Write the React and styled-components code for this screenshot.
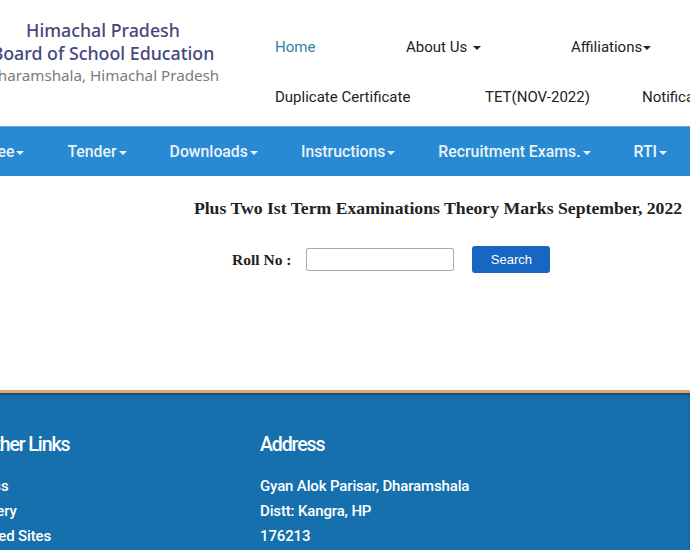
import React from "react";
import styled, { createGlobalStyle } from "styled-components";

const GlobalStyle = createGlobalStyle`
  html, body {
    margin: 0;
    padding: 0;
    background: #ffffff;
    overflow: hidden;
  }
  body {
    font-family: Roboto, "Liberation Sans", sans-serif;
  }
`;

const Header = styled.header`
  display: flex;
  height: 126px;
  background: #ffffff;
`;

const Brand = styled.div`
  flex: none;
  width: 250px;
  margin-left: -22px;
  padding-top: 19px;
  text-align: center;
  font-family: "Noto Sans", "Open Sans", sans-serif;
  white-space: nowrap;
`;

const BrandLine = styled.div`
  font-size: ${(p) => p.$size || 17.8}px;
  line-height: 22.5px;
  font-weight: ${(p) => (p.$muted ? 400 : 500)};
  color: ${(p) => (p.$muted ? "#7b7b7b" : "#45487c")};
`;

const TopMenu = styled.nav`
  display: flex;
  flex-direction: column;
  margin-left: 47px;
  padding-top: 37px;
  gap: 30px;
`;

const MenuRow = styled.div`
  display: flex;
  white-space: nowrap;
`;

const MenuItem = styled.a`
  display: inline-flex;
  align-items: center;
  flex: none;
  width: ${(p) => (p.$w ? `${p.$w}px` : "auto")};
  font-size: 15px;
  line-height: 20px;
  color: ${(p) => (p.$active ? "#2f7fa8" : "#222222")};
  text-decoration: none;
`;

const Caret = styled.span`
  display: inline-block;
  width: 0;
  height: 0;
  margin-left: ${(p) => (p.$gap ? p.$gap : 3)}px;
  margin-top: 2px;
  border-top: 4px solid currentColor;
  border-left: 4px solid transparent;
  border-right: 4px solid transparent;
`;

const NavBar = styled.nav`
  height: 50px;
  background: #278ad2;
  border-top: 1px solid #5aaee6;
  box-sizing: border-box;
  display: flex;
  align-items: center;
  gap: 43px;
  white-space: nowrap;
  overflow: hidden;
`;

const NavItem = styled.a`
  display: inline-flex;
  align-items: center;
  flex: none;
  font-size: 15.8px;
  font-weight: 500;
  color: #eaf3fb;
  text-decoration: none;
  &:first-child {
    margin-left: -11px;
  }
`;

const Main = styled.main`
  height: 214px;
  padding-top: 21px;
  box-sizing: border-box;
`;

const Title = styled.h2`
  margin: 0 0 0 180px;
  width: 516px;
  text-align: center;
  font-family: "Liberation Serif", "Times New Roman", serif;
  font-size: 17.7px;
  font-weight: 700;
  color: #222222;
  line-height: 22px;
  white-space: nowrap;
`;

const SearchForm = styled.form`
  display: flex;
  align-items: center;
  margin: 27px 0 0 232px;
`;

const Label = styled.label`
  font-family: "Liberation Serif", "Times New Roman", serif;
  font-size: 15.5px;
  font-weight: 700;
  color: #222222;
  margin-right: 15px;
`;

const Input = styled.input`
  width: 148px;
  height: 23px;
  box-sizing: border-box;
  border: 1px solid #a9a9a9;
  border-radius: 2px;
  padding: 0 6px;
  outline: none;
`;

const Button = styled.button`
  margin-left: 18px;
  width: 78px;
  height: 27px;
  border: none;
  border-radius: 3px;
  background: #1766c2;
  color: #ffffff;
  font-family: "Liberation Sans", Arial, sans-serif;
  font-size: 13px;
  cursor: pointer;
`;

const Footer = styled.footer`
  height: 160px;
  background: #1670ad;
  border-top: 3px solid #e2a673;
  box-shadow: inset 0 2px 2px rgba(40, 40, 50, 0.55);
  display: grid;
  grid-template-columns: 289px 300px;
  margin-left: -29px;
  padding-top: 39px;
  box-sizing: border-box;
  color: #ffffff;
`;

const FooterCol = styled.div`
  display: flex;
  flex-direction: column;
`;

const FooterHeading = styled.h3`
  margin: 0 0 16px;
  padding-left: ${(p) => p.$indent || 0}px;
  font-size: 19.5px;
  font-weight: 500;
  letter-spacing: -1.1px;
  line-height: 26px;
  white-space: nowrap;
`;

const FooterLink = styled.span`
  font-size: 15px;
  font-weight: 500;
  letter-spacing: -0.15px;
  line-height: 25px;
  white-space: nowrap;
`;

const navItems = [
  "Fee",
  "Tender",
  "Downloads",
  "Instructions",
  "Recruitment Exams.",
  "RTI",
  "Events",
];

function App() {
  return (
    <>
      <GlobalStyle />
      <Header>
        <Brand>
          <BrandLine>Himachal Pradesh</BrandLine>
          <BrandLine>Board of School Education</BrandLine>
          <BrandLine $muted $size={15.2}>
            Dharamshala, Himachal Pradesh
          </BrandLine>
        </Brand>
        <TopMenu>
          <MenuRow>
            <MenuItem $w={131} $active>
              Home
            </MenuItem>
            <MenuItem $w={165}>
              About Us <Caret $gap={6} />
            </MenuItem>
            <MenuItem>
              Affiliations
              <Caret $gap={1} />
            </MenuItem>
          </MenuRow>
          <MenuRow>
            <MenuItem $w={210}>Duplicate Certificate</MenuItem>
            <MenuItem $w={157}>TET(NOV-2022)</MenuItem>
            <MenuItem>Notifications</MenuItem>
          </MenuRow>
        </TopMenu>
      </Header>
      <NavBar>
        {navItems.map((item) => (
          <NavItem key={item}>
            {item}
            {item !== "Events" && <Caret $gap={2} />}
          </NavItem>
        ))}
      </NavBar>
      <Main>
        <Title>Plus Two Ist Term Examinations Theory Marks September, 2022</Title>
        <SearchForm onSubmit={(e) => e.preventDefault()}>
          <Label htmlFor="roll">Roll No :</Label>
          <Input id="roll" type="text" />
          <Button type="submit">Search</Button>
        </SearchForm>
      </Main>
      <Footer>
        <FooterCol>
          <FooterHeading $indent={11}>Other Links</FooterHeading>
          <FooterLink>Press</FooterLink>
          <FooterLink>Gallery</FooterLink>
          <FooterLink>Linked Sites</FooterLink>
        </FooterCol>
        <FooterCol>
          <FooterHeading>Address</FooterHeading>
          <FooterLink>Gyan Alok Parisar, Dharamshala</FooterLink>
          <FooterLink>Distt: Kangra, HP</FooterLink>
          <FooterLink>176213</FooterLink>
        </FooterCol>
      </Footer>
    </>
  );
}

export default App;
